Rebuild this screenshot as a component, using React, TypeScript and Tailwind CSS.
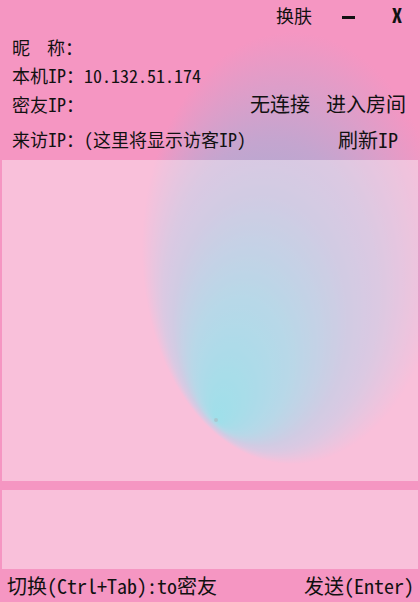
import React from 'react';

const Backdrop = () => (
  <svg className="absolute inset-0" width="420" height="602" viewBox="0 0 420 602">
    <defs>
      <radialGradient
        id="skin"
        gradientUnits="userSpaceOnUse"
        cx="0"
        cy="0"
        r="1"
        fx="-0.5"
        fy="0.8"
        gradientTransform="translate(292 248) scale(150 216)"
      >
        <stop offset="0" stopColor="#5fcbdc" />
        <stop offset="0.32" stopColor="#89bed9" />
        <stop offset="0.58" stopColor="#b3a9d1" />
        <stop offset="0.72" stopColor="#c4a5cf" />
        <stop offset="0.86" stopColor="#dd9ec9" />
        <stop offset="1" stopColor="#f596c2" />
      </radialGradient>
    </defs>
    <rect width="420" height="602" fill="#f596c2" />
    <rect width="420" height="602" fill="url(#skin)" />
    <circle cx="216" cy="420" r="2" fill="#6f98a6" opacity="0.8" />
  </svg>
);

export default function App() {
  return (
    <div className="relative w-[420px] h-[602px] overflow-hidden bg-[#f596c2] text-[#111] font-['Noto_Sans_Mono_CJK_SC','Noto_Sans_CJK_SC',monospace]">
      <Backdrop />
      <div className="relative flex flex-col h-full">
        {/* title bar */}
        <div className="h-[30px] flex items-center justify-end pr-[18px] text-[18px] leading-none">
          <span>换肤</span>
          <div className="ml-[30px] mt-[4px] w-[13px] h-[3px] bg-[#111]" />
          <span className="ml-[37px] text-[20px] font-bold">X</span>
        </div>

        <div className="mt-[3px] h-[28px] flex items-center pl-[12px] text-[18px]">
          <span>昵</span>
          <span className="ml-[17px]">称：</span>
        </div>
        <div className="h-[28px] flex items-center pl-[12px] text-[18px]">
          <span>本机IP：10.132.51.174</span>
        </div>
        <div className="h-[30px] flex items-center justify-between pl-[12px] pr-[14px]">
          <span className="text-[18px]">密友IP：</span>
          <div className="flex items-center gap-[16px] text-[20px]">
            <span>无连接</span>
            <span>进入房间</span>
          </div>
        </div>
        <div className="h-[41px] flex items-center justify-between pl-[12px] pr-[22px]">
          <span className="text-[18px]">来访IP：(这里将显示访客IP)</span>
          <span className="text-[20px]">刷新IP</span>
        </div>

        {/* message view */}
        <div className="mx-[2px] h-[321px] bg-white/40" />
        {/* input box */}
        <div className="mx-[2px] mt-[9px] h-[79px] bg-white/40" />

        <div className="flex-1 flex items-center justify-between pl-[7px] pr-[6px] text-[20px]">
          <span>切换(Ctrl+Tab):to密友</span>
          <span>发送(Enter)</span>
        </div>
      </div>
    </div>
  );
}
